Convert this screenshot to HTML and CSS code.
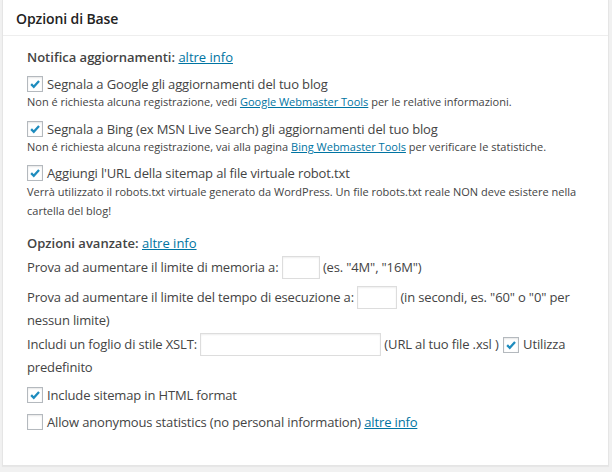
FILE: index.html
```html
<!DOCTYPE html>
<html lang="it">
<head>
<meta charset="utf-8">
<title>Opzioni di Base</title>
<link rel="stylesheet" href="styles.css">
</head>
<body>
<div class="postbox">
  <h3 class="hndle">Opzioni di Base</h3>
  <div class="inside">
    <h4 class="sect">Notifica aggiornamenti: <a href="#">altre info</a></h4>

    <div class="item item-1">
      <label class="row"><span class="cb on"><svg viewBox="0 0 16 16"><path d="M3.6 8.2 L6.6 11.2 L12.6 4.6"/></svg></span>Segnala a Google gli aggiornamenti del tuo blog</label>
      <div class="desc">Non é richiesta alcuna registrazione, vedi <a href="#">Google Webmaster Tools</a> per le relative informazioni.</div>
    </div>

    <div class="item item-2">
      <label class="row"><span class="cb on"><svg viewBox="0 0 16 16"><path d="M3.6 8.2 L6.6 11.2 L12.6 4.6"/></svg></span>Segnala a Bing (ex MSN Live Search) gli aggiornamenti del tuo blog</label>
      <div class="desc">Non é richiesta alcuna registrazione, vai alla pagina <a href="#">Bing Webmaster Tools</a> per verificare le statistiche.</div>
    </div>

    <div class="item item-3">
      <label class="row"><span class="cb on"><svg viewBox="0 0 16 16"><path d="M3.6 8.2 L6.6 11.2 L12.6 4.6"/></svg></span>Aggiungi l'URL della sitemap al file virtuale robot.txt</label>
      <div class="desc desc-long">Verrà utilizzato il robots.txt virtuale generato da WordPress. Un file robots.txt reale NON deve esistere nella cartella del blog!</div>
    </div>

    <h4 class="sect sect-adv">Opzioni avanzate: <a href="#">altre info</a></h4>

    <p class="opt opt-mem">Prova ad aumentare il limite di memoria a: <span class="field f-mem"></span> (es. "4M", "16M")</p>
    <p class="opt opt-time">Prova ad aumentare il limite del tempo di esecuzione a: <span class="field f-time"></span> (in secondi, es. "60" o "0" per nessun limite)</p>
    <p class="opt opt-xsl">Includi un foglio di stile XSLT: <span class="field f-xsl"></span> (URL al tuo file .xsl ) <span class="cb on cb-inline"><svg viewBox="0 0 16 16"><path d="M3.6 8.2 L6.6 11.2 L12.6 4.6"/></svg></span> Utilizza predefinito</p>

    <label class="row row-html"><span class="cb on"><svg viewBox="0 0 16 16"><path d="M3.6 8.2 L6.6 11.2 L12.6 4.6"/></svg></span>Include sitemap in HTML format</label>
    <label class="row row-stats"><span class="cb"></span>Allow anonymous statistics (no personal information)&nbsp;<a href="#">altre info</a></label>
  </div>
</div>
</body>
</html>
```
FILE: styles.css
```css
html, body {
  margin: 0;
  padding: 0;
  background: #f1f1f1;
}
body {
  font-family: "Open Sans", "Noto Sans", sans-serif;
  color: #444;
  font-size: 13px;
  width: 612px;
  height: 472px;
  overflow: hidden;
}
a {
  color: #0074a2;
  text-decoration: underline;
}
.postbox {
  margin: 0 3px 0 2px;
  background: #fff;
  border: 1px solid #e5e5e5;
  border-top: none;
  box-shadow: 0 1px 1px rgba(0,0,0,.04);
}
.hndle {
  margin: 0;
  height: 36px;
  box-sizing: border-box;
  padding: 9px 13px 7px;
  font-size: 14px;
  line-height: 20px;
  font-weight: 600;
  letter-spacing: -0.1px;
  color: #222;
  border-bottom: 1px solid #eee;
}
.inside {
  padding: 11px 17px 33px 24px;
}
.sect {
  margin: 0;
  font-size: 13px;
  line-height: 20px;
  font-weight: 600;
  color: #444;
}
.sect a { font-weight: 400; }
.sect-adv { margin-top: 13px; }

.row {
  display: flex;
  align-items: center;
  height: 20px;
  line-height: 20px;
  white-space: nowrap;
  letter-spacing: -0.15px;
}
.cb {
  flex: none;
  display: inline-block;
  width: 16px;
  height: 16px;
  box-sizing: border-box;
  border: 1px solid #b4b9be;
  background: #fff;
  box-shadow: inset 0 1px 2px rgba(0,0,0,.1);
  margin: 0 4px 0 0;
}
.cb svg {
  display: block;
  width: 14px;
  height: 14px;
  fill: none;
  stroke: #1e8cbe;
  stroke-width: 2.6;
  stroke-linecap: butt;
  stroke-linejoin: miter;
}
.cb-inline {
  vertical-align: -4px;
  margin: 0 1px 0 1px;
}
.desc {
  font-size: 11px;
  line-height: 18px;
  margin-top: -1px;
  letter-spacing: 0;
}
.desc-long {
  line-height: 19px;
}
.item-1 { margin-top: 7px; }
.item-2 { margin-top: 8px; }
.item-3 { margin-top: 7px; }

.opt {
  margin: 0;
  line-height: 23px;
  letter-spacing: -0.15px;
}
.opt-mem { margin-top: 3px; }
.opt-time { margin-top: 7px; }
.opt-xsl { margin-top: 1px; }
.field {
  display: inline-block;
  vertical-align: top;
  height: 23px;
  box-sizing: border-box;
  border: 1px solid #ddd;
  background: #fff;
  box-shadow: inset 0 1px 2px rgba(0,0,0,.07);
}
.f-mem { width: 38px; }
.f-time { width: 40px; }
.f-xsl { width: 181px; }

.row-html { margin-top: 6px; }
.row-stats { margin-top: 7px; }
```
